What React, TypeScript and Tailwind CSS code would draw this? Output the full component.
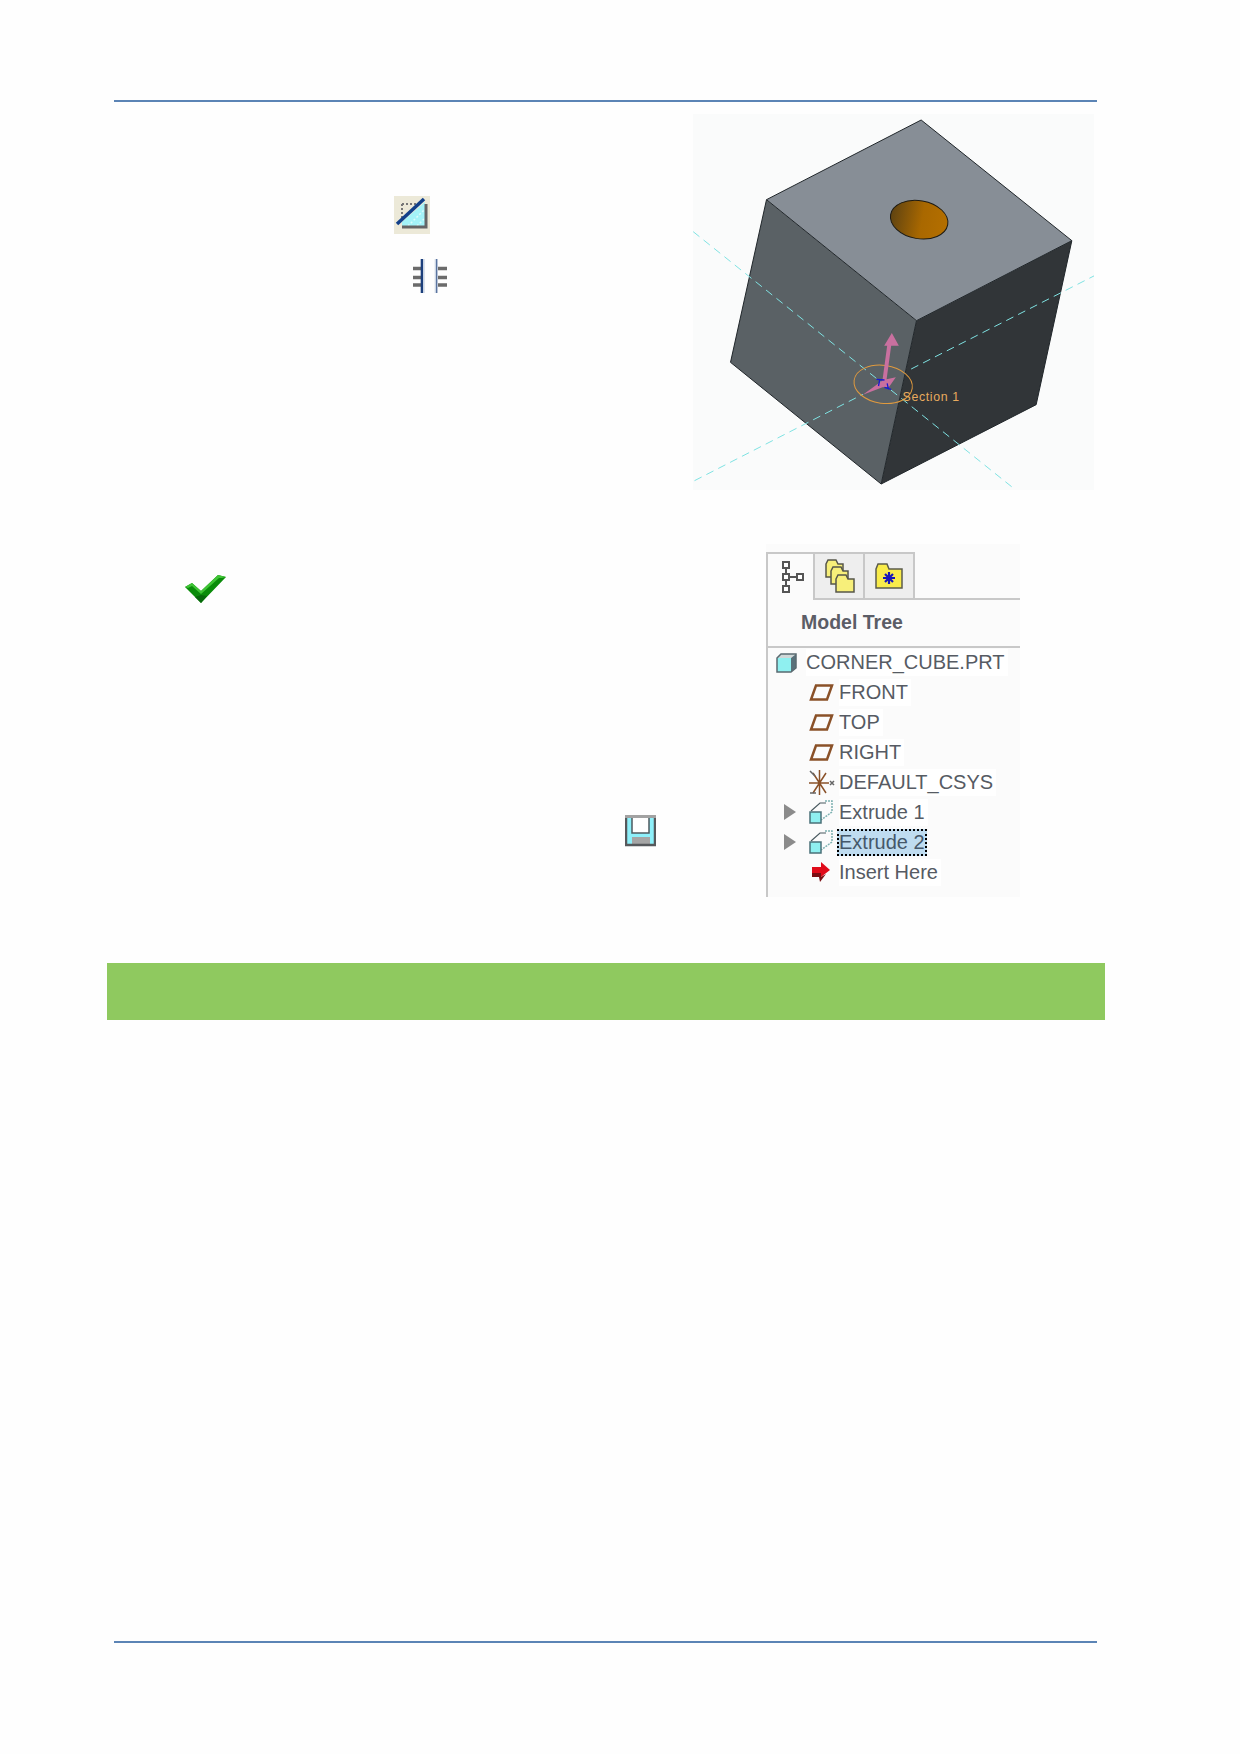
const font = "font-['Liberation_Sans',Arial,sans-serif]";

function CubeRender() {
  return (
    <svg className="block h-[376px] w-[401px] bg-[#fafbfb]" viewBox="36 40 1202 1128">
      <defs>
        <linearGradient id="hole" x1="0" x2="1" y1="0" y2="0">
          <stop offset="0" stopColor="#5f4311" />
          <stop offset="0.55" stopColor="#a96800" />
          <stop offset="1" stopColor="#b46f00" />
        </linearGradient>
      </defs>
      <polygon fill="#878e96" points="720,58 1172,420 706,660 256,297" />
      <polygon fill="#5a6165" points="256,297 706,660 600,1150 148,785" />
      <polygon fill="#313538" points="706,660 1172,420 1065,912 600,1150" />
      <g fill="none" stroke="#20262a" strokeWidth="3">
        <polygon points="720,58 1172,420 1065,912 600,1150 148,785 256,297" />
        <polyline points="256,297 706,660 1172,420" />
        <line x1="706" x2="600" y1="660" y2="1150" />
      </g>
      <ellipse cx="714" cy="357" fill="url(#hole)" rx="87" ry="57" stroke="#1d1a12" strokeWidth="3" transform="rotate(10 714 357)" />
      <g fill="none" stroke="#7fe3e3" strokeDasharray="24 16" strokeWidth="3">
        <line x1="36" x2="1000" y1="393" y2="1165" />
        <line x1="40" x2="545" y1="1140" y2="881" />
        <line x1="690" x2="1240" y1="805" y2="525" />
      </g>
      <ellipse cx="606" cy="851" fill="none" rx="88" ry="57" stroke="#e09a3e" strokeWidth="3" transform="rotate(8 606 851)" />
      <g fill="#c9709f">
        <polygon points="632,697 653,735 630,735 616,838 604,838 618,735 609,735" />
        <polygon points="545,882 606,838 644,830 624,858 604,860" />
      </g>
      <g fill="none" stroke="#1a1ad0" strokeWidth="4">
        <path d="M586 836 L610 838 M596 836 L592 856 M618 848 L622 866 M610 860 L630 866" />
      </g>
      <text fill="#e8ab5e" fontFamily="Liberation Sans, Arial, sans-serif" fontSize="37" letterSpacing="2" x="664" y="900">
        Section 1
      </text>
    </svg>
  );
}

function SketchButton() {
  return (
    <svg className="block h-[38px] w-[36px]" viewBox="0 0 36 38">
      <rect fill="#ece9d8" height="38" width="36" />
      <polygon fill="#a4f3f8" points="8,26 31,6 32,31 8,31" />
      <path d="M14 30 L31 13 M23 30 L31 22" stroke="#dcfcfc" strokeDasharray="2 2" strokeWidth="1.500" />
      <path d="M8 31 H32 V8" fill="none" stroke="#666" strokeWidth="3" />
      <path d="M8 8 H24 M8 8 V24" fill="none" stroke="#777" strokeDasharray="2 2" strokeWidth="2" />
      <line stroke="#12408a" strokeWidth="3.500" x1="3" x2="30" y1="28" y2="3" />
    </svg>
  );
}

function ConstraintIcon() {
  return (
    <svg className="block h-[34px] w-[34px]" viewBox="0 0 34 34">
      <path d="M0 9.500 H8 M0 18.500 H8 M0 26 H8 M25 9.500 H34 M25 18.500 H34 M25 26 H34" stroke="#6b6b6b" strokeWidth="3.500" />
      <rect fill="#ccd6e4" height="34" width="1.700" x="10" />
      <rect fill="#1c3f7c" height="34" width="2.300" x="7.700" />
      <rect fill="#ccd6e4" height="34" width="1.600" x="21.700" />
      <rect fill="#1c3f7c" height="34" width="1" x="23.300" />
    </svg>
  );
}

function CheckIcon() {
  return (
    <svg className="block h-[30px] w-[41px]" viewBox="0 0 41 30">
      <polygon fill="#0a8c0a" points="0,13 7,9 16,17 33,1 41,3 16,29" />
      <polygon fill="#3fc435" points="0,13 7,9 16,17 33,1 41,3 37,4 34,4 16,20 7,12 3,14" />
      <polygon fill="#07680b" points="10,23 16,21 22,22 16,29" />
    </svg>
  );
}

function SaveIcon() {
  return (
    <svg className="block h-[32px] w-[31px]" viewBox="0 0 31 32">
      <rect fill="#8ef0fa" height="30" width="29" x="1" y="1" />
      <rect fill="#fff" height="16" width="17" x="7" y="2" />
      <path d="M7 2 V18 H24 V2" fill="none" stroke="#4d5a5f" strokeWidth="1.500" />
      <rect fill="#a5a5a5" height="8" width="18" x="7" y="22" />
      <path d="M1 3 V30 H30 V3" fill="none" stroke="#56595c" strokeWidth="2.500" />
      <rect fill="#a2a2a2" height="3" width="31" />
    </svg>
  );
}

function TreeTabIcon() {
  return (
    <svg className="h-[32px] w-[22px]" viewBox="0 0 22 32">
      <g fill="#fff" stroke="#555" strokeWidth="2">
        <rect height="6" width="6" x="1" y="1" />
        <rect height="6" width="6" x="1" y="13" />
        <rect height="6" width="6" x="1" y="25" />
        <rect height="6" width="6" x="15" y="13" />
      </g>
      <path d="M4 7 V13 M4 19 V25 M7 16 H15" stroke="#555" strokeWidth="2" />
    </svg>
  );
}

function FoldersTabIcon() {
  return (
    <svg className="h-[34px] w-[30px]" viewBox="0 0 30 34">
      <g fill="#f7ef7a" stroke="#57574a" strokeWidth="1.500">
        <path d="M1 5 L3 1 H11 L13 5 H18 V18 H1 Z" />
        <path d="M6 12 L8 8 H16 L18 12 H23 V25 H6 Z" />
        <path d="M11 20 L13 16 H21 L23 20 H29 V33 H11 Z" />
      </g>
    </svg>
  );
}

function StarFolderIcon() {
  return (
    <svg className="h-[26px] w-[28px]" viewBox="0 0 28 26">
      <path d="M1 6 L3 1 H12 L14 6 H27 V25 H1 Z" fill="#f9ec4a" stroke="#5c5c4c" strokeWidth="1.500" />
      <path d="M14 9 V21 M8 15 H20 M10 11 L18 19 M18 11 L10 19" stroke="#1717b8" strokeWidth="2.200" />
    </svg>
  );
}

function PartIcon() {
  return (
    <svg className="h-[20px] w-[21px]" viewBox="0 0 21 20">
      <polygon fill="#8ff0f0" points="1,5 15,5 15,19 1,19" />
      <polygon fill="#cfd8d8" points="1,5 5,1 20,1 15,5" />
      <polygon fill="#59717a" points="15,5 20,1 20,15 15,19" />
      <path d="M1 5 L5 1 H20 V15 L15 19 H1 Z" fill="none" stroke="#5a6a70" strokeWidth="1.500" />
    </svg>
  );
}

function PlaneIcon() {
  return (
    <svg className="h-[17px] w-[25px]" viewBox="0 0 25 17">
      <polygon fill="none" points="7,1.500 23,1.500 18,15.500 2,15.500" stroke="#8a5128" strokeWidth="2.500" />
    </svg>
  );
}

function CsysIcon() {
  return (
    <svg className="h-[27px] w-[27px]" viewBox="0 0 27 27">
      <path d="M5 4 L18 24 M18 4 L5 24 M1 14 H21 M11.500 1 V26" fill="none" stroke="#8a5128" strokeWidth="1.500" />
      <path d="M2 2 L7 7 M2 24 H8 M22 12 L26 16 M22 16 L26 12" stroke="#666" strokeWidth="1.500" />
    </svg>
  );
}

function ExtrudeIcon() {
  return (
    <svg className="h-[24px] w-[24px]" viewBox="0 0 24 24">
      <path d="M16 1 H23 V12 L12 20" fill="none" stroke="#7db1b1" strokeDasharray="2 1" strokeWidth="1.500" />
      <path d="M2 11 L11 3 H17" fill="none" stroke="#4a5a60" strokeWidth="1.200" />
      <rect fill="#8ff0f0" height="11" stroke="#4a7078" strokeWidth="1.500" width="11" x="1" y="12" />
    </svg>
  );
}

function InsertArrow() {
  return (
    <svg className="h-[20px] w-[18px]" viewBox="0 0 18 20">
      <polygon fill="#e00b1a" points="0,5 9,5 9,0 18,8 9,15 9,11 0,11" />
      <polygon fill="#7a0d12" points="0,11 9,11 9,15 14,12 8,20 7,15 0,15" />
    </svg>
  );
}

function TreeRow({ arrow, icon, label, selected }: { arrow?: boolean; icon: React.ReactNode; label: string; selected?: boolean }) {
  return (
    <div className="flex h-[29.900px] items-center">
      <div className="flex w-[38px] justify-center pl-[6px]">
        {arrow && <div className="h-0 w-0 border-y-[8px] border-l-[12px] border-y-transparent border-l-[#8b8b8b]" />}
      </div>
      <div className="flex w-[33px] justify-center pr-[3px]">{icon}</div>
      <span
        className={
          selected
            ? 'ml-[-2px] flex h-[27px] items-center border-2 border-dotted border-black bg-[#bfdcf0] text-[20px] text-[#45586a]'
            : 'bg-white pr-[3px] text-[20px] leading-[27px] text-[#565b63]'
        }
      >
        {label}
      </span>
    </div>
  );
}

function ModelTree() {
  return (
    <div className="flex h-[353px] w-[254px] flex-col bg-[#fbfbfb] pt-[8px]">
      <div className="flex h-[48px]">
        <div className="flex w-[49px] items-center justify-center border-x-2 border-t-2 border-[#c8c8c8] bg-[#fbfbfb] pl-[5px]">
          <TreeTabIcon />
        </div>
        <div className="flex w-[50px] items-center justify-center border-r-2 border-t-2 border-b-2 border-[#c8c8c8] bg-[#eeeeee] pl-[2px]">
          <FoldersTabIcon />
        </div>
        <div className="flex w-[50px] items-center justify-center border-r-2 border-t-2 border-b-2 border-[#c8c8c8] bg-[#eeeeee]">
          <StarFolderIcon />
        </div>
        <div className="flex-1 border-b-2 border-[#c8c8c8]" />
      </div>
      <div className="flex flex-1 flex-col border-l-2 border-[#c8c8c8]">
        <div className="flex h-[48px] items-center border-b-2 border-[#c8c8c8] pl-[33px] text-[19.500px] font-bold text-[#5b5d66]">
          Model Tree
        </div>
        <div>
          <div className="flex h-[29.900px] items-center pl-[8px]">
            <PartIcon />
            <span className="ml-[9px] bg-white pr-[3px] text-[20px] leading-[27px] text-[#565b63]">CORNER_CUBE.PRT</span>
          </div>
          <TreeRow icon={<PlaneIcon />} label="FRONT" />
          <TreeRow icon={<PlaneIcon />} label="TOP" />
          <TreeRow icon={<PlaneIcon />} label="RIGHT" />
          <TreeRow icon={<CsysIcon />} label="DEFAULT_CSYS" />
          <TreeRow arrow icon={<ExtrudeIcon />} label="Extrude 1" />
          <TreeRow arrow icon={<ExtrudeIcon />} label="Extrude 2" selected />
          <TreeRow icon={<InsertArrow />} label="Insert Here" />
        </div>
      </div>
    </div>
  );
}

export default function App() {
  return (
    <div className={`flex h-[1754px] w-[1240px] flex-col bg-[#fefefe] pt-[100px] ${font}`}>
      <div className="ml-[114px] h-[2px] w-[983px] bg-[#5b84b5]" />

      <div className="mt-[12px] flex pl-[394px] pr-[146px]">
        <div className="flex flex-col pt-[82px]">
          <SketchButton />
          <div className="ml-[19px] mt-[25px]">
            <ConstraintIcon />
          </div>
        </div>
        <div className="ml-auto">
          <CubeRender />
        </div>
      </div>

      <div className="mt-[54px] flex pl-[185px] pr-[220px]">
        <div className="flex flex-col pt-[30px]">
          <CheckIcon />
          <div className="ml-[440px] mt-[211px]">
            <SaveIcon />
          </div>
        </div>
        <div className="ml-auto">
          <ModelTree />
        </div>
      </div>

      <div className="ml-[107px] mt-[66px] h-[57px] w-[998px] bg-[#8fc95f]" />

      <div className="mb-[111px] ml-[114px] mt-auto h-[2px] w-[983px] bg-[#5b84b5]" />
    </div>
  );
}
